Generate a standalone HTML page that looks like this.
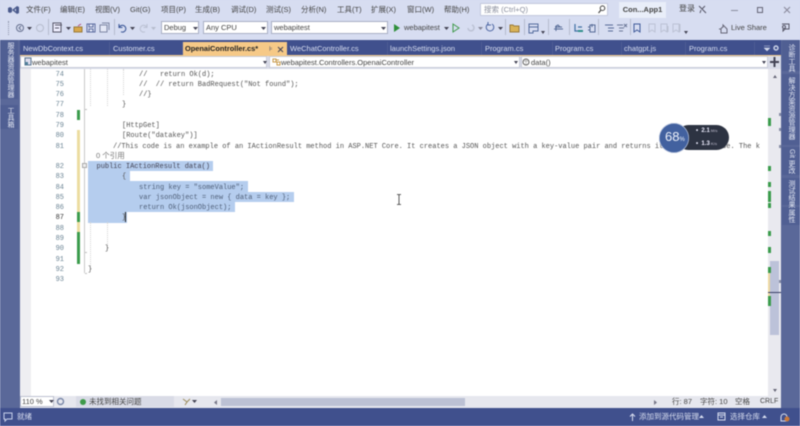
<!DOCTYPE html>
<html><head><meta charset="utf-8"><style>
html,body{margin:0;padding:0;width:800px;height:426px;overflow:hidden;background:#d6dcf0}
#r{position:relative;width:800px;height:426px;overflow:hidden;font-family:"Liberation Sans","Noto Sans CJK SC",sans-serif;font-size:7.5px;color:#333;filter:blur(.5px)}
#r div,#r span.a{position:absolute;white-space:nowrap}
.m{top:4px;line-height:12px;font-size:7.5px;color:#444}
.tab{top:42px;line-height:13px;font-size:7.5px;color:#d8def0;height:13px}
.sep{top:42px;width:1px;height:13px;background:#4d5c94}
.ln{left:52px;width:12px;text-align:right;font:7px/10px "Liberation Mono",monospace;color:#6b8494}
.c{font:7px/10px "Liberation Mono",monospace;color:#555}
.sel{background:#b5cdee;left:88px;height:10.4px}
.g{left:77px;width:3px}
.ts{top:19px;width:1px;height:16px;background:#b4bacd}
.combo{background:#fff;border:1px solid #a9afc4;height:13px;top:21px;line-height:13px;font-size:7.5px;padding-left:2px;box-sizing:border-box;color:#444}
.v{writing-mode:vertical-rl;color:#e4e8f4;font-size:7px;line-height:10px}
.map{left:768px;width:3px;background:#3b9c4c}
svg{position:absolute;overflow:visible}
</style></head><body><div id="r">
<div style="left:0;top:0;width:800px;height:40px;background:#d7ddf1"></div>
<div style="left:0;top:40px;width:800px;height:15px;background:#40508d"></div>
<div style="left:0;top:40px;width:20px;height:386px;background:#5a6899"></div>
<div style="left:781px;top:40px;width:19px;height:386px;background:#5a6899"></div>
<div style="left:20px;top:55px;width:761px;height:1px;background:#f1c98a"></div>
<div style="left:20px;top:56px;width:761px;height:13px;background:#d9dce8"></div>
<div style="left:20px;top:69px;width:761px;height:327px;background:#fff"></div>
<div style="left:20px;top:69px;width:11px;height:327px;background:#eeeef2"></div>
<div style="left:768px;top:69px;width:13px;height:327px;background:#e9e9ef"></div>

<!-- title bar -->
<svg style="left:7px;top:5px" width="13" height="10" viewBox="0 0 13 10"><path d="M1 3v4l2 1 2-1V3L3 2zM5 5l5-4 2 1v6l-2 1z" fill="#4a5a8c"/><path d="M9 3.5v3L7.5 5z" fill="#d7ddf1"/></svg>
<div class="m" style="left:26px">文件(F)</div><div class="m" style="left:60px">编辑(E)</div><div class="m" style="left:95px">视图(V)</div><div class="m" style="left:130px">Git(G)</div><div class="m" style="left:161px">项目(P)</div><div class="m" style="left:195px">生成(B)</div><div class="m" style="left:231px">调试(D)</div><div class="m" style="left:266px">测试(S)</div><div class="m" style="left:301px">分析(N)</div><div class="m" style="left:337px">工具(T)</div><div class="m" style="left:371px">扩展(X)</div><div class="m" style="left:407px">窗口(W)</div><div class="m" style="left:444px">帮助(H)</div>
<div style="left:480px;top:3px;width:128px;height:13px;background:#fff;border:1px solid #c3c9dd;box-sizing:border-box;line-height:12px;padding-left:3px;color:#8a8f9e;font-size:7.5px">搜索 (Ctrl+Q)</div>
<svg style="left:597px;top:5px" width="9" height="9"><circle cx="5.5" cy="3.2" r="2.3" fill="none" stroke="#444"/><path d="M4 5 1.5 8" stroke="#444" stroke-width="1.2"/></svg>
<div style="left:619px;top:2px;width:47px;height:16px;background:#e9eef9;line-height:16px;text-align:center;font-size:7.5px;font-weight:bold;color:#444">Con...App1</div>
<div class="m" style="left:679px;top:3px;font-size:8px">登录</div>
<svg style="left:698px;top:5px" width="9" height="9"><path d="M1 1 8 8M7 1 4 4M2 8 3 5" stroke="#556" fill="none"/></svg>
<div style="left:731px;top:10px;width:7px;height:1px;background:#8a8f9e"></div>
<div style="left:757px;top:7px;width:6px;height:6px;border:1px solid #667;box-sizing:border-box"></div>
<svg style="left:783px;top:6px" width="8" height="8"><path d="M1 1 7 7M7 1 1 7" stroke="#889" fill="none"/></svg>

<!-- toolbar -->
<div style="left:8px;top:21px;width:2px;height:14px;border-left:1px dotted #8d94aa"></div>
<svg style="left:15px;top:23px" width="10" height="10"><circle cx="5" cy="5" r="3.5" fill="none" stroke="#66708f"/><path d="M6 3 4 5l2 2" fill="none" stroke="#66708f"/></svg>
<svg style="left:27px;top:27px" width="5" height="3"><path d="M0 0h5L2.5 3z" fill="#445"/></svg>
<svg style="left:35px;top:23px" width="10" height="10"><circle cx="5" cy="5" r="3.5" fill="none" stroke="#b6bccd"/></svg>
<div class="ts" style="left:48px"></div>
<svg style="left:52px;top:22px" width="11" height="12"><path d="M1 1h8v9H1z" fill="#eef" stroke="#556"/><path d="M3 3h7M3 6h4" stroke="#556"/></svg>
<svg style="left:66px;top:27px" width="5" height="3"><path d="M0 0h5L2.5 3z" fill="#445"/></svg>
<svg style="left:73px;top:23px" width="10" height="10"><path d="M1 4h8v5H1z" fill="#d8a84c" stroke="#9a7b3a"/><path d="M5 3l3-2" stroke="#b04a7a"/></svg>
<svg style="left:86px;top:23px" width="10" height="10"><path d="M1 1h8v8H1z" fill="#e4e8f6" stroke="#5a6a9e"/><path d="M3 1v3h4V1M3 9V6h4v3" fill="none" stroke="#5a6a9e"/></svg>
<svg style="left:99px;top:22px" width="11" height="11"><path d="M1 3h7v7H1z" fill="#e4e8f6" stroke="#7d86a3"/><path d="M3 1h7v7" fill="none" stroke="#7d86a3"/></svg>
<div class="ts" style="left:114px"></div>
<svg style="left:118px;top:23px" width="9" height="10"><path d="M1 1v3.5h3.5M1.5 4A3.4 3.4 0 1 1 3 8.8" fill="none" stroke="#3f5a99" stroke-width="1.1"/></svg>
<svg style="left:130px;top:27px" width="5" height="3"><path d="M0 0h5L2.5 3z" fill="#445"/></svg>
<svg style="left:139px;top:23px" width="9" height="10"><path d="M8 1v3.5H4.5M7.5 4A3.4 3.4 0 1 0 6 8.8" fill="none" stroke="#bcc2d4" stroke-width="1.1"/></svg>
<svg style="left:151px;top:27px" width="5" height="3"><path d="M0 0h5L2.5 3z" fill="#b6bccd"/></svg>
<div class="combo" style="left:161px;top:21px;width:38px;line-height:11px;font-size:7.5px">Debug</div>
<svg style="left:193px;top:27px" width="5" height="3"><path d="M0 0h5L2.5 3z" fill="#445"/></svg>
<div class="combo" style="left:203px;top:21px;width:65px;line-height:11px">Any CPU</div>
<svg style="left:261px;top:27px" width="5" height="3"><path d="M0 0h5L2.5 3z" fill="#445"/></svg>
<div class="combo" style="left:271px;top:21px;width:117px;line-height:11px">webapitest</div>
<svg style="left:381px;top:27px" width="5" height="3"><path d="M0 0h5L2.5 3z" fill="#445"/></svg>
<svg style="left:393px;top:23px" width="8" height="10"><path d="M1 1v8l6-4z" fill="#2f8f3a"/></svg>
<div style="left:404px;top:22px;line-height:12px;font-size:7.5px;color:#444">webapitest</div>
<svg style="left:444px;top:27px" width="5" height="3"><path d="M0 0h5L2.5 3z" fill="#445"/></svg>
<svg style="left:452px;top:23px" width="8" height="10"><path d="M1 1v8l6-4z" fill="none" stroke="#3f9a4a"/></svg>
<svg style="left:465px;top:23px" width="10" height="10"><path d="M3 5a3 3 0 1 0 4-3" fill="none" stroke="#bcc2d4" stroke-width="1.5"/></svg>
<svg style="left:478px;top:27px" width="5" height="3"><path d="M0 0h5L2.5 3z" fill="#889"/></svg>
<svg style="left:485px;top:22px" width="10" height="11"><path d="M7 2a3.8 3.8 0 1 1-4 0M3 0v3h3" fill="none" stroke="#4d66a3"/></svg>
<svg style="left:498px;top:27px" width="5" height="3"><path d="M0 0h5L2.5 3z" fill="#445"/></svg>
<div class="ts" style="left:505px"></div>
<svg style="left:509px;top:23px" width="11" height="10"><path d="M1 2h3l1 1h5v6H1z" fill="#d8b258" stroke="#9a7b3a"/></svg>
<div class="ts" style="left:524px"></div>
<svg style="left:528px;top:23px" width="11" height="10"><path d="M1 1h9v7H5v2H1zM1 4h9" fill="none" stroke="#536a9c"/></svg>
<svg style="left:541px;top:31px" width="4" height="3"><path d="M0 0h4L2 3z" fill="#445"/></svg>
<div class="ts" style="left:548px"></div>
<svg style="left:553px;top:23px" width="11" height="10"><path d="M2 4h7M1 6h9M3 8V3l2-1 2 2" fill="none" stroke="#556a96"/></svg>
<div class="ts" style="left:569px"></div>
<svg style="left:573px;top:23px" width="11" height="10"><path d="M2 1v7h7M5 4h4" fill="none" stroke="#3e6fa3" stroke-width="1.2"/><path d="M5 8h5" stroke="#2f8f8a" stroke-width="2"/></svg>
<svg style="left:587px;top:23px" width="11" height="10"><path d="M3 2h5v7H3zM1 4h2M1 7h2M5 1v3" fill="none" stroke="#556a96"/></svg>
<div class="ts" style="left:598px"></div>
<svg style="left:604px;top:24px" width="11" height="9"><path d="M1 1h8M4 4h6M4 7h5" fill="none" stroke="#556a96"/></svg>
<svg style="left:616px;top:23px" width="12" height="10"><path d="M1 2h6M3 5h5M3 8h4M8 1l3 3M11 1 8 4" fill="none" stroke="#6a7696"/></svg>
<div class="ts" style="left:630px"></div>
<svg style="left:633px;top:23px" width="8" height="10"><path d="M1 1h6v8L4 7 1 9z" fill="none" stroke="#3f5a99"/></svg>
<svg style="left:648px;top:23px" width="8" height="10"><path d="M1 1h6v8L4 7 1 9z" fill="none" stroke="#bcc2d4"/></svg>
<svg style="left:660px;top:23px" width="10" height="10"><path d="M1 1h6v8L4 7 1 9zM8 3v6" fill="none" stroke="#bcc2d4"/></svg>
<svg style="left:672px;top:23px" width="10" height="10"><path d="M1 1h6v8L4 7 1 9zM8 1v8" fill="none" stroke="#bcc2d4"/></svg>
<svg style="left:684px;top:31px" width="4" height="3"><path d="M0 0h4L2 3z" fill="#445"/></svg>
<svg style="left:718px;top:24px" width="10" height="10"><path d="M1 5h2v4h6V5L5 1v2a3 3 0 0 0-2 2" fill="none" stroke="#667"/></svg>
<div style="left:731px;top:22px;line-height:12px;font-size:7.5px;color:#444">Live Share</div>
<svg style="left:780px;top:23px" width="10" height="10"><path d="M2 1h7v5H5L3 8V6" fill="none" stroke="#556"/><circle cx="4" cy="4" r="1.5" fill="none" stroke="#556"/></svg>

<!-- tabs -->
<div class="tab" style="left:23px">NewDbContext.cs</div><div class="sep" style="left:109px"></div>
<div class="tab" style="left:113px">Customer.cs</div><div class="sep" style="left:182px"></div>
<div style="left:183px;top:42px;width:104px;height:14px;background:#f6c987"></div>
<div class="tab" style="left:185px;color:#222;font-weight:bold;font-size:7.4px">OpenaiController.cs*</div>
<div style="left:269px;top:46px;font-size:7px;line-height:8px;color:#556">⊧</div>
<svg style="left:277px;top:46px" width="7" height="7"><path d="M1 1 6 6M6 1 1 6" stroke="#445" fill="none"/></svg>
<div class="tab" style="left:290px">WeChatController.cs</div><div class="sep" style="left:387px"></div>
<div class="tab" style="left:390px">launchSettings.json</div><div class="sep" style="left:481px"></div>
<div class="tab" style="left:485px">Program.cs</div><div class="sep" style="left:552px"></div>
<div class="tab" style="left:555px">Program.cs</div><div class="sep" style="left:621px"></div>
<div class="tab" style="left:624px">chatgpt.js</div><div class="sep" style="left:685px"></div>
<div class="tab" style="left:689px">Program.cs</div><div class="sep" style="left:754px"></div>
<svg style="left:764px;top:46px" width="6" height="5"><path d="M0 0h6M0 2h6L3 5z" fill="#cfd6ea" stroke="#cfd6ea" stroke-width=".5"/></svg>
<svg style="left:773px;top:45px" width="6" height="6"><circle cx="3" cy="3" r="2" fill="none" stroke="#cfd6ea" stroke-width="1.4"/></svg>

<!-- nav bar -->
<div style="left:20px;top:56px;width:247px;height:12px;background:#fff;border:1px solid #c8cbd8;box-sizing:border-box;line-height:11px;padding-left:11px;font-size:7.5px;color:#444">webapitest</div>
<svg style="left:24px;top:57px" width="8" height="9"><path d="M1 1h6v7H1z" fill="#dde" stroke="#57738f"/><path d="M1 5h3v3H1z" fill="#4f7f9a"/></svg>
<svg style="left:263px;top:61px" width="4" height="3"><path d="M0 0h4L2 3z" fill="#445"/></svg>
<div style="left:269px;top:56px;width:251px;height:12px;background:#fff;border:1px solid #c8cbd8;box-sizing:border-box;line-height:11px;padding-left:11px;font-size:7.5px;color:#444">webapitest.Controllers.OpenaiController</div>
<svg style="left:272px;top:57px" width="9" height="9"><path d="M1 2h3v3H1zM5 5h3v3H5zM4 3h3" fill="none" stroke="#c89a4a"/></svg>
<svg style="left:514px;top:61px" width="4" height="3"><path d="M0 0h4L2 3z" fill="#445"/></svg>
<div style="left:521px;top:56px;width:247px;height:12px;background:#fff;border:1px solid #c8cbd8;box-sizing:border-box;line-height:11px;padding-left:9px;font-size:7.5px;color:#444">data()</div>
<svg style="left:522px;top:58px" width="8" height="8"><circle cx="4" cy="4" r="3" fill="none" stroke="#666"/><path d="M1.5 3h5M4 1v6" stroke="#888" stroke-width=".5"/></svg>
<svg style="left:762px;top:61px" width="4" height="3"><path d="M0 0h4L2 3z" fill="#445"/></svg>
<svg style="left:770px;top:57px" width="9" height="10"><path d="M4.5 0v10M0 5h9" stroke="#445" stroke-width="2"/></svg>

<!-- selection -->
<div class="sel" style="top:160.6px;width:125px"></div>
<div class="sel" style="top:171px;width:42px"></div>
<div class="sel" style="top:181.3px;width:160px"></div>
<div class="sel" style="top:191.6px;width:206px"></div>
<div class="sel" style="top:202px;width:147px"></div>
<div class="sel" style="top:212.3px;width:39px"></div>

<!-- gutter -->
<div class="g" style="top:110px;height:10px;background:#3b9c4c"></div>
<div class="g" style="top:130px;height:82px;background:#ecdca0"></div>
<div class="g" style="top:212px;height:10px;background:#3b9c4c"></div>
<div class="g" style="top:222px;height:10px;background:#ecdca0"></div>
<div class="g" style="top:232px;height:32px;background:#3b9c4c"></div>
<div style="left:84px;top:69px;width:1px;height:204px;background:#c9c9c9"></div>
<div style="left:85px;top:109px;width:2px;height:1px;background:#c0c0c0"></div>
<div style="left:85px;top:252px;width:2px;height:1px;background:#c0c0c0"></div>
<div style="left:85px;top:273px;width:2px;height:1px;background:#c0c0c0"></div>
<div style="left:82px;top:163px;width:5px;height:5px;border:1px solid #aaa;box-sizing:border-box;background:#eee"></div>
<div style="left:90px;top:69px;height:37px;border-left:1px dotted #d5d5d5"></div>
<div style="left:90px;top:222px;height:48px;border-left:1px dotted #d5d5d5"></div>
<div style="left:107px;top:69px;height:37px;border-left:1px dotted #d5d5d5"></div>
<div style="left:123px;top:69px;height:26px;border-left:1px dotted #d5d5d5"></div>
<div style="left:107px;top:222px;height:28px;border-left:1px dotted #d5d5d5"></div>

<!-- line numbers -->
<div class="ln" style="top:69.5px">74</div><div class="ln" style="top:80px">75</div><div class="ln" style="top:90px">76</div><div class="ln" style="top:100.3px">77</div><div class="ln" style="top:111px">78</div><div class="ln" style="top:121px">79</div><div class="ln" style="top:131px">80</div><div class="ln" style="top:142px">81</div><div class="ln" style="top:162px">82</div><div class="ln" style="top:172px">83</div><div class="ln" style="top:183px">84</div><div class="ln" style="top:193px">85</div><div class="ln" style="top:203px">86</div><div class="ln" style="top:213px;color:#333">87</div><div class="ln" style="top:224px">88</div><div class="ln" style="top:234px">89</div><div class="ln" style="top:244px">90</div><div class="ln" style="top:255px">91</div><div class="ln" style="top:265px">92</div><div class="ln" style="top:275px">93</div>

<!-- code -->
<div class="c" style="left:139px;top:69.5px">//&nbsp;&nbsp;&nbsp;return Ok(d);</div>
<div class="c" style="left:139px;top:80px">//&nbsp;&nbsp;// return BadRequest("Not found");</div>
<div class="c" style="left:139px;top:90px">//}</div>
<div class="c" style="left:122px;top:100.3px">}</div>
<div class="c" style="left:122px;top:121px">[HttpGet]</div>
<div class="c" style="left:122px;top:131px">[Route("datakey")]</div>
<div class="c" style="left:113px;top:142px;width:655px;overflow:hidden">//This code is an example of an IActionResult method in ASP.NET Core. It creates a JSON object with a key-value pair and returns it in the response. The k</div>
<div style="left:96px;top:150px;font-size:7.5px;line-height:11px;color:#777">0 个引用</div>
<div class="c" style="left:96.5px;top:162px;color:#445">public IActionResult data()</div>
<div class="c" style="left:122px;top:172px">{</div>
<div class="c" style="left:139px;top:183px;color:#4f5f78">string key = "someValue";</div>
<div class="c" style="left:139px;top:193px;color:#4f5f78">var jsonObject = new { data = key };</div>
<div class="c" style="left:139px;top:203px;color:#4f5f78">return Ok(jsonObject);</div>
<div class="c" style="left:122px;top:213px">}</div>
<div style="left:125px;top:212px;width:1px;height:10px;background:#222"></div>
<div class="c" style="left:105px;top:244px">}</div>
<div class="c" style="left:88px;top:265px">}</div>

<!-- ibeam -->
<svg style="left:396px;top:194px" width="6" height="11"><path d="M1 .5h1.5l.5.5.5-.5H5M3 1v9M1 10.5h1.5l.5-.5.5.5H5" fill="none" stroke="#333" stroke-width=".8"/></svg>

<!-- widget -->
<div style="left:676px;top:125px;width:53px;height:25px;background:#2d3342;border-radius:13px"></div>
<div style="left:659px;top:123px;width:30px;height:30px;border-radius:50%;background:#42619f;box-shadow:0 0 0 .6px #c9d2e6 inset"></div>
<div style="left:665px;top:129px;font-size:13px;line-height:16px;color:#eef2fa">68<span style="font-size:6px">%</span></div>
<div style="left:696px;top:127px;font-size:6px;line-height:8px;color:#eef;font-weight:bold">• &nbsp;2.1<span style="font-size:4px;color:#99a"> M/s</span></div>
<div style="left:696px;top:140px;font-size:6px;line-height:8px;color:#eef;font-weight:bold">• &nbsp;1.3<span style="font-size:4px;color:#99a"> K/s</span></div>

<!-- scrollbar -->
<div style="left:773px;top:75px;width:0;height:0;border:2.5px solid transparent;border-bottom:3px solid #667;border-top:0"></div>
<div style="left:773px;top:389px;width:0;height:0;border:2.5px solid transparent;border-top:3px solid #667;border-bottom:0"></div>
<div style="left:770px;top:261px;width:9px;height:74px;background:#bcc2d9"></div>
<div class="map" style="top:118px;height:8px"></div>
<div class="map" style="top:166px;height:5px"></div>
<div class="map" style="top:182px;height:5px"></div>
<div class="map" style="top:191px;height:11px"></div>
<div class="map" style="top:203px;height:5px"></div>
<div class="map" style="top:231px;height:5px"></div>
<div class="map" style="top:247px;height:6px"></div>
<div class="map" style="top:267px;height:6px"></div>
<div style="left:768px;top:273px;width:2px;height:23px;background:#eed9a0"></div>
<div class="map" style="top:296px;height:10px"></div>
<div style="left:768px;top:292px;width:13px;height:1px;background:#3a3f66"></div>
<div style="left:779px;top:113px;width:2px;height:3px;background:#888ea6"></div>
<div style="left:779px;top:128px;width:2px;height:3px;background:#888ea6"></div>
<div style="left:779px;top:145px;width:2px;height:3px;background:#888ea6"></div>
<div style="left:779px;top:280px;width:2px;height:3px;background:#888ea6"></div>

<!-- left vertical -->
<div style="left:0;top:40px;width:18px;height:59px;background:#505f93"></div>
<div style="left:0;top:105px;width:18px;height:24px;background:#505f93"></div>
<div class="v" style="left:5px;top:42px">服务器资源管理器</div>
<div class="v" style="left:5px;top:107px">工具箱</div>

<!-- right vertical -->
<div style="left:782px;top:40px;width:18px;height:31px;background:#505f93"></div>
<div style="left:782px;top:74px;width:18px;height:71px;background:#505f93"></div>
<div style="left:782px;top:147px;width:18px;height:28px;background:#505f93"></div>
<div style="left:782px;top:178px;width:18px;height:27px;background:#505f93"></div>
<div style="left:782px;top:207px;width:18px;height:18px;background:#505f93"></div>
<div class="v" style="left:786px;top:44px">诊断工具</div>
<div class="v" style="left:786px;top:77px">解决方案资源管理器</div>
<div class="v" style="left:786px;top:149px">Git 更改</div>
<div class="v" style="left:786px;top:180px">测试结果</div>
<div class="v" style="left:786px;top:209px">属性</div>

<!-- editor status -->
<div style="left:20px;top:396px;width:761px;height:12px;background:#e6e7ee"></div>
<div style="left:20px;top:396px;width:34px;height:11px;background:#fff;border:1px solid #bcc0d0;box-sizing:border-box;line-height:10px;padding-left:1px;font-size:7.5px;color:#444">110 %</div>
<svg style="left:49px;top:400px" width="5" height="3"><path d="M0 0h5L2.5 3z" fill="#445"/></svg>
<svg style="left:56px;top:397px" width="9" height="9"><circle cx="4.5" cy="4.5" r="3" fill="none" stroke="#7a88a8" stroke-width="1.4"/></svg>
<div style="left:76px;top:396px;width:98px;height:11px;background:#d9dbe6"></div>
<div style="left:80px;top:399px;width:6px;height:6px;background:#3f9a4a;border-radius:50%"></div>
<div style="left:89px;top:396px;line-height:12px;font-size:7.5px;color:#444">未找到相关问题</div>
<svg style="left:182px;top:398px" width="9" height="8"><path d="M1 1l4 3-2 3M8 1 5 4" stroke="#9a8a5a" fill="none"/></svg>
<svg style="left:192px;top:400px" width="5" height="3"><path d="M0 0h5L2.5 3z" fill="#445"/></svg>
<svg style="left:214px;top:400px" width="3" height="5"><path d="M3 0v5L0 2.5z" fill="#778"/></svg>
<div style="left:221px;top:398px;width:244px;height:8px;background:#bcc1d4"></div>
<svg style="left:654px;top:400px" width="3" height="5"><path d="M0 0v5l3-2.5z" fill="#778"/></svg>
<div style="left:672px;top:396px;line-height:12px;font-size:7.5px;color:#444">行: 87</div>
<div style="left:700px;top:396px;line-height:12px;font-size:7.5px;color:#444">字符: 10</div>
<div style="left:735px;top:396px;line-height:12px;font-size:7.5px;color:#444">空格</div>
<div style="left:760px;top:396px;line-height:12px;font-size:7px;color:#444">CRLF</div>

<!-- status bar -->
<div style="left:0;top:408px;width:800px;height:18px;background:#40508d"></div>
<svg style="left:3px;top:412px" width="10" height="10"><path d="M1 1h8v6H4L2 9V7H1z" fill="none" stroke="#c8d0ea"/></svg>
<div style="left:17px;top:411px;line-height:12px;font-size:7.5px;color:#d8def0">就绪</div>
<svg style="left:629px;top:413px" width="7" height="8"><path d="M3.5 8V1M1 3.5 3.5 1 6 3.5" fill="none" stroke="#d8def0"/></svg>
<div style="left:639px;top:411px;line-height:12px;font-size:7.5px;color:#d8def0">添加到源代码管理</div>
<svg style="left:699px;top:415px" width="5" height="3"><path d="M0 3h5L2.5 0z" fill="#d8def0"/></svg>
<svg style="left:717px;top:412px" width="9" height="9"><path d="M1 1h7v7H1zM1 3h7M3 5h3" fill="none" stroke="#d8def0"/></svg>
<div style="left:730px;top:411px;line-height:12px;font-size:7.5px;color:#d8def0">选择仓库</div>
<svg style="left:762px;top:415px" width="5" height="3"><path d="M0 3h5L2.5 0z" fill="#d8def0"/></svg>
<svg style="left:779px;top:412px" width="11" height="10"><path d="M2 9V5a3 3 0 0 1 6 0v4z" fill="none" stroke="#d8def0"/><circle cx="8" cy="7" r="2.5" fill="#c9793a"/></svg>
</div></body></html>
